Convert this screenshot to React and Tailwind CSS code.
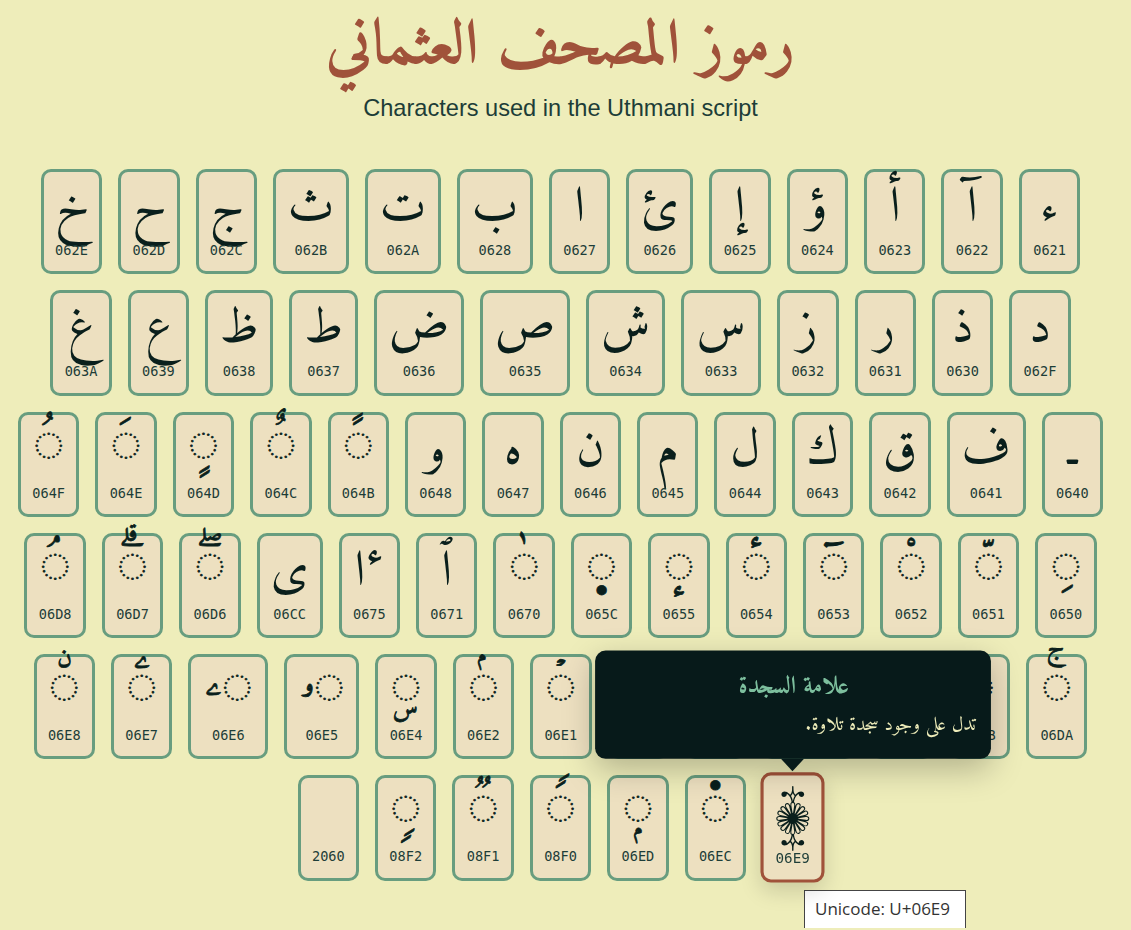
const WIDE = {
  '062B': 'w-[76px]', '062A': 'w-[76px]', '0628': 'w-[76px]', '0626': 'w-[67px]',
  '0638': 'w-[68px]', '0637': 'w-[69px]', '0636': 'w-[90px]', '0635': 'w-[90px]', '0634': 'w-[79px]', '0633': 'w-[80px]',
  '0641': 'w-[79px]', '06CC': 'w-[66px]', '06E6': 'w-[80px]', '06E5': 'w-[75px]', '06DE': 'w-[93px]',
};

const CARDS = [
  ['0621', 'ء'], ['0622', 'آ'], ['0623', 'أ'], ['0624', 'ؤ'], ['0625', 'إ'], ['0626', 'ئ'], ['0627', 'ا'],
  ['0628', 'ب'], ['062A', 'ت'], ['062B', 'ث'], ['062C', 'ج'], ['062D', 'ح'], ['062E', 'خ'],
  ['062F', 'د'], ['0630', 'ذ'], ['0631', 'ر'], ['0632', 'ز'], ['0633', 'س'], ['0634', 'ش'], ['0635', 'ص'],
  ['0636', 'ض'], ['0637', 'ط'], ['0638', 'ظ'], ['0639', 'ع'], ['063A', 'غ'],
  ['0640', 'ـ'], ['0641', 'ف'], ['0642', 'ق'], ['0643', 'ك'], ['0644', 'ل'], ['0645', 'م'], ['0646', 'ن'],
  ['0647', 'ه'], ['0648', 'و'], ['064B', '◌ً'], ['064C', '◌ٌ'], ['064D', '◌ٍ'], ['064E', '◌َ'], ['064F', '◌ُ'],
  ['0650', '◌ِ'], ['0651', '◌ّ'], ['0652', '◌ْ'], ['0653', '◌ٓ'], ['0654', '◌ٔ'], ['0655', '◌ٕ'], ['065C', '◌ٜ'],
  ['0670', '◌ٰ'], ['0671', 'ٱ'], ['0675', 'ٵ'], ['06CC', 'ی'], ['06D6', '◌ۖ'], ['06D7', '◌ۗ'], ['06D8', '◌ۘ'],
  ['06DA', '◌ۚ'], ['06DB', '◌ۛ'], ['06DC', '◌ۜ'], ['06DE', '۞'], ['06DF', '◌۟'], ['06E0', '◌۠'], ['06E1', '◌ۡ'],
  ['06E2', '◌ۢ'], ['06E4', '◌ۣ'], ['06E5', '◌ۥ'], ['06E6', '◌ۦ'], ['06E7', '◌ۧ'], ['06E8', '◌ۨ'],
  ['06E9', '۩'], ['06EC', '◌۬'], ['06ED', '◌ۭ'], ['08F0', '◌ࣰ'], ['08F1', '◌ࣱ'], ['08F2', '◌ࣲ'], ['2060', '\u2060'],
];

function Glyph({ glyph, active }) {
  // marks sit on a dotted circle: smaller, raised and thickened so the dots read as in the shot
  if (glyph.startsWith('◌')) {
    return <span className="-mt-[8px] mb-[5px] h-[72px] whitespace-nowrap text-[44px] leading-[72px] text-[#0a1f1c] [-webkit-text-stroke:0.8px_#0a1f1c]">{glyph}</span>;
  }
  return <span className={`h-[69px] whitespace-nowrap leading-[74px] text-[#0a1f1c] ${active ? 'text-[54px]' : 'text-[50px]'}`}>{glyph}</span>;
}

function Card({ code, glyph }) {
  const active = code === '06E9';
  return (
    <div className={`relative flex h-[105.3px] ${WIDE[code] || 'w-[61.4px]'} flex-col items-center rounded-[10px] border-[3px] bg-[#ede0c0] ${active ? 'z-10 scale-105 border-[#a0523a] shadow-[0_8px_20px_rgba(0,0,0,0.15)]' : 'border-[#689d7f]'}`}>
      <Glyph glyph={glyph} active={active} />
      <span className="text-[13.6px] leading-[18px] text-[#1d3d38] font-['DejaVu_Sans_Mono',monospace]" dir="ltr">{code}</span>
      {active && (
        <div className="absolute bottom-[calc(100%+16px)] left-1/2 w-[377px] -translate-x-1/2 rounded-[10px] bg-[#071a1a] pb-[16px] pl-4 pr-[14px] pt-[15px] text-center shadow-[0_10px_30px_rgba(0,0,0,0.25)]" dir="rtl">
          <div className="text-[23.5px] font-bold leading-[40px] text-[#7dbf9e]">علامة السجدة</div>
          <div className="mt-[2px] text-right text-[18.4px] leading-[30px] text-[#eeedba]">تدل على وجود سجدة تلاوة.</div>
          <div className="absolute left-1/2 top-full h-0 w-0 -translate-x-1/2 border-x-[11px] border-t-[12px] border-x-transparent border-t-[#071a1a]" />
        </div>
      )}
    </div>
  );
}

export default function App() {
  return (
    <div className="relative h-[930px] w-[1131px] overflow-hidden bg-[#eeedba] font-['Amiri','DejaVu_Sans',serif]">
      <div className="w-[1121px] px-4">
        <h1 className="pt-[4px] text-center text-[63px] font-bold leading-[88px] text-[#a0523a]" dir="rtl">رموز المصحف العثماني</h1>
        <p className="text-center text-[23.6px] leading-[32px] text-[#1d3d38] font-['Liberation_Sans',sans-serif]">Characters used in the Uthmani script</p>
        <div className="mt-[45px] flex flex-wrap justify-center gap-4" dir="rtl">
          {CARDS.map(([code, glyph]) => <Card key={code} code={code} glyph={glyph} />)}
        </div>
      </div>
      {/* native title tooltip */}
      <div className="absolute left-[804px] top-[890px] h-[38px] w-[162px] border border-b-0 border-[#444] bg-white pl-[10px] text-[17px] leading-[36px] text-[#333] font-['Open_Sans',sans-serif]">Unicode: U+06E9</div>
    </div>
  );
}
